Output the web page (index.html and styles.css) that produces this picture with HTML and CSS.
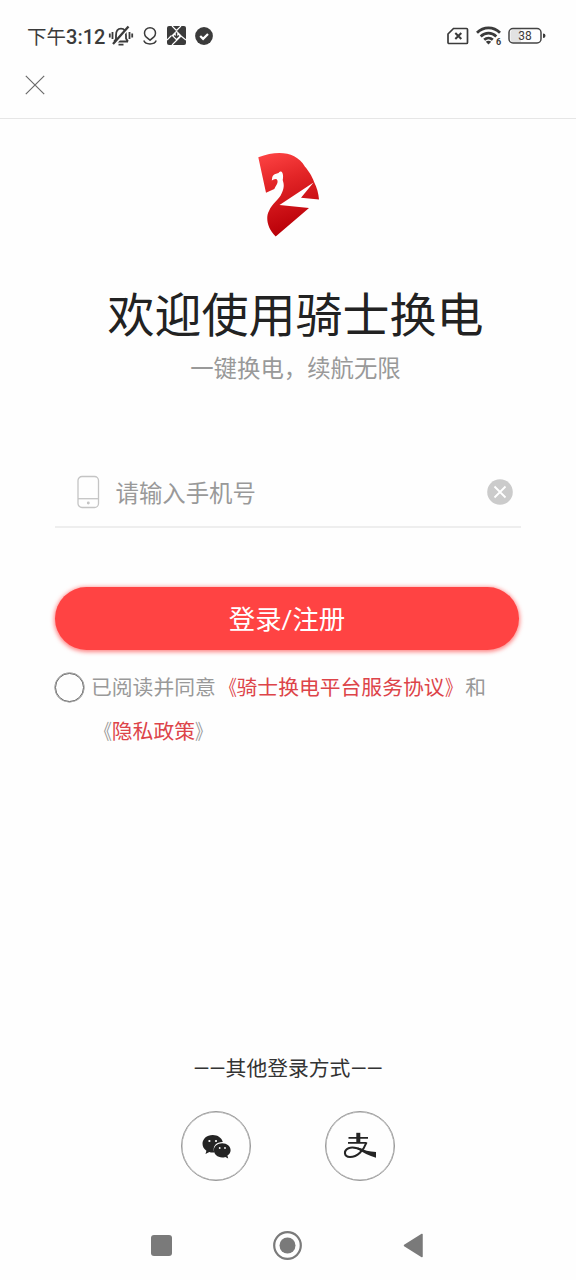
FILE: index.html
```html
<!DOCTYPE html>
<html lang="zh-CN">
<head>
<meta charset="utf-8">
<title>登录</title>
<link rel="stylesheet" href="styles.css">
</head>
<body>
<div class="screen">
  <div class="status">
    <span class="time"><span class="ampm">下午</span>3:12</span>
    <svg class="bell" width="26" height="22" viewBox="0 0 26 22" fill="none" stroke="#3b3b3b" stroke-width="1.8">
      <path d="M6 16.500h14M8 15V10.500C8 6 10 3.700 13 3.700S18 6 18 10.500V13.500l2 3"/>
      <path d="M6.200 16.500L8 14"/>
      <path d="M6.500 20L22 1.500" stroke="#fefefe" stroke-width="2"/>
      <path d="M5 19L20.500 1.500" stroke-width="2.300"/>
      <path d="M10.500 19.700h5M4.500 7v7M1.800 8.500v4M21.500 7v7M24.200 8.500v4"/>
    </svg>
    <svg class="pin" width="16" height="20" viewBox="0 0 16 20" fill="none" stroke="#3b3b3b" stroke-width="1.500">
      <path d="M8 14.200L4.300 11.200A5.500 5.500 0 1 1 11.700 11.200ZM1.800 14.500c1.700 4.500 10.700 4.500 12.400 0"/>
    </svg>
    <svg class="tile" width="19" height="19" viewBox="0 0 19 19">
      <rect width="19" height="19" rx="2" fill="#3b3b3b"/>
      <path d="M5 0L9.500 4.500M14 10L19 14M9.500 4.500L14 0M4.500 9.500L0 14M14 10L5 19" stroke="#fff" stroke-width="1.200" fill="none"/>
      <path d="M9.500 4.500l5 5-5 5-5-5Z" fill="#fff"/>
      <path d="M9.500 6.500v5M7.200 9.500l2.300 2.300 2.300-2.300" stroke="#3b3b3b" stroke-width="1.400" fill="none"/>
    </svg>
    <svg class="check" width="18" height="18" viewBox="0 0 18 18">
      <circle cx="9" cy="9" r="8.900" fill="#3b3b3b"/>
      <path d="M5.200 9l2.900 2.900L13 7" fill="none" stroke="#fff" stroke-width="2.200"/>
    </svg>
    <svg class="sim" width="22" height="18" viewBox="0 0 22 18" fill="none" stroke="#3b3b3b" stroke-width="1.700">
      <path d="M6.500 1.500H19.500a1 1 0 0 1 1 1V15.500a1 1 0 0 1-1 1H2a1 1 0 0 1-1-1V7Z"/>
      <path d="M8.300 6l6 6M14.300 6l-6 6" stroke-width="2"/>
    </svg>
    <svg class="wifi" width="26" height="20" viewBox="0 0 26 20" fill="none" stroke="#3b3b3b" stroke-width="2.700">
      <path d="M1 6.800C7.500.2 17.500.2 24 6.800M4.700 10.500c4.500-4.500 11.100-4.500 15.600 0M8.200 13.800c2.500-2.400 6.100-2.400 8.600 0"/>
      <path d="M9.800 15.700q2.700-1.800 5.400 0l-2.700 2.900Z" fill="#3b3b3b" stroke="none"/>
      <text x="20" y="19" class="wifi-gen">6</text>
    </svg>
    <svg class="battery" width="38" height="18" viewBox="0 0 38 18">
      <path d="M6 2.500h7v13H6a3.500 3.500 0 0 1-3.500-3.500V6A3.500 3.500 0 0 1 6 2.500Z" fill="#e2e2e2"/>
      <rect x="1" y="1.500" width="32" height="14.500" rx="4" fill="none" stroke="#444" stroke-width="1.500"/>
      <path d="M35 6.500q2.500 0 2.500 2.300t-2.500 2.300Z" fill="#3b3b3b"/>
      <text x="17" y="13" text-anchor="middle" class="level">38</text>
    </svg>
  </div>

  <div class="navbar">
    <svg width="20" height="20" viewBox="0 0 20 20" stroke="#6b6b6b" stroke-width="1.200"><path d="M.8.800l18.400 18.400M19.200.800L.8 19.200"/></svg>
  </div>

  <div class="brand">
    <svg class="logo" width="62" height="86" viewBox="0 0 62 86">
      <defs><linearGradient id="red" x1="0" y1="0" x2=".25" y2="1"><stop offset="0" stop-color="#ff4545"/><stop offset=".4" stop-color="#e32527"/><stop offset="1" stop-color="#b90008"/></linearGradient></defs>
      <path fill="url(#red)" d="M.3 5.300C20-2 38-.5 47 14.700C50 18 54 24 56 29.700C59 36 60.500 41 61 47.500L43 45.700L55.500 30.500L21.500 53L51 56L17.700 84.500C9 76 7.500 65 11 59C14 51.500 21 48 23.700 41.300C27 34 25.500 31 24.700 28C25.500 24 25 20 23 19.500Q21.500 19 20.500 21Q15 22 14.300 25L13.800 28.500Q16.500 26.300 18.700 27.200Q20.300 29 19 32Q17.500 34.500 16.300 37L8 40.700Z"/>
    </svg>
    <h1 class="title">欢迎使用骑士换电</h1>
    <p class="tagline">一键换电，续航无限</p>
  </div>

  <div class="phone">
    <svg class="device" width="23" height="34" viewBox="0 0 23 34" fill="none" stroke="#c4c4c4" stroke-width="1.300">
      <rect x="1" y="1.500" width="20.500" height="31" rx="4"/><path d="M1 23.700h20.500"/><circle cx="11.300" cy="28" r=".8" fill="#999"/>
    </svg>
    <span class="placeholder">请输入手机号</span>
    <svg class="clear" width="26" height="26" viewBox="0 0 26 26"><circle cx="13" cy="13" r="12.800" fill="#cbcbcb"/><path d="M7.500 7.500l11 11M18.500 7.500l-11 11" stroke="#fff" stroke-width="1.800"/></svg>
  </div>

  <div class="submit">登录/注册</div>

  <div class="terms">
    <span class="radio"></span>
    <p class="agree">已阅读并同意<span class="link"><span class="open">《</span>骑士换电平台服务协议<span class="close">》</span></span>和<br><span class="open">《</span><span class="link">隐私政策</span><span class="close">》</span></p>
  </div>

  <div class="other">——其他登录方式——</div>
  <div class="socials">
    <div class="social">
      <svg class="wechat" width="30" height="26" viewBox="0 0 30 26">
        <path fill="#242424" d="M10.800 1C4.600 1 .5 5 .5 9.800c0 2.900 1.500 5.300 3.900 6.900L3.500 20l3.800-2c1.600.5 3.300.6 5 .4C10 11.500 15 7.700 20.800 7.900C19.700 3.800 15.700 1 10.800 1Z"/>
        <path fill="#242424" d="M20.200 9.200c-4.800 0-8.300 3.100-8.300 7s3.500 7.200 8.300 7.200c1.100 0 2.100-.1 3.100-.5l2.900 1.700-.8-3c2.100-1.300 3.200-3.200 3.200-5.400c0-3.900-3.600-7-8.400-7Z"/>
        <g fill="#fff"><circle cx="7.400" cy="7" r="1.100"/><circle cx="14" cy="7" r="1.100"/><circle cx="17.700" cy="14" r=".9"/><circle cx="23" cy="14" r=".9"/></g>
      </svg>
    </div>
    <div class="social">
      <svg class="pay" width="34" height="28" viewBox="0 0 34 28">
        <path fill="none" stroke="#242424" stroke-width="1.700" d="M5.500 5.800h19.500M5 10.800H23.500"/>
        <path fill="#242424" d="M13.300.8h4v10h-4Z"/>
        <path fill="none" stroke="#242424" stroke-width="2.100" d="M23.500 10.500C20.500 18.500 14.500 25 7 25C.8 25 .3 18.500 5.500 16.200C9.500 14.500 16 16.500 20 18.300"/>
        <path fill="#242424" d="M15 15.500c6.500 2.800 11 4.300 18 4.500v5.800C26 23.800 20 20.500 14 17Z"/>
      </svg>
    </div>
  </div>

  <div class="system">
    <svg width="21" height="21" viewBox="0 0 21 21"><rect width="21" height="21" rx="3" fill="#7a7a7a"/></svg>
    <svg width="29" height="29" viewBox="0 0 29 29"><circle cx="14.500" cy="14.500" r="13.300" fill="none" stroke="#7a7a7a" stroke-width="2.200"/><circle cx="14.500" cy="14.500" r="8" fill="#7a7a7a"/></svg>
    <svg width="20" height="25" viewBox="0 0 20 25"><path d="M1.500 12.500L19 1.500v22Z" fill="#7a7a7a" stroke="#7a7a7a" stroke-width="1.500" stroke-linejoin="round"/></svg>
  </div>
</div>
</body>
</html>
```
FILE: styles.css
```css
* { box-sizing: border-box; }
body { margin: 0; background: #fefefe; font-family: Roboto, "Noto Sans CJK SC", sans-serif; text-spacing-trim: space-all; }
h1, p { margin: 0; font-weight: 400; }
svg { display: block; flex: none; }
.screen { width: 576px; height: 1280px; display: flex; flex-direction: column; }

.status { height: 61px; padding: 10px 30px 0 27px; display: flex; align-items: center; color: #3b3b3b; }
.time { width: 81px; font-size: 20px; font-weight: 500; white-space: nowrap; }
.ampm { font-size: 19.5px; font-weight: 400; }
.pin { margin-left: 8px; }
.tile { margin-left: 9px; }
.check { margin-left: 9px; }
.sim { margin-left: auto; }
.wifi { margin-left: 7px; }
.battery { margin-left: 6px; }
.wifi-gen { font: 700 9px Roboto, sans-serif; fill: #3b3b3b; stroke: none; }
.level { font: 400 12px Roboto, sans-serif; fill: #3b3b3b; }

.navbar { height: 58px; padding: 14px 25px 0; border-bottom: 1px solid #e6e6e6; }

.brand { display: flex; flex-direction: column; align-items: center; padding: 33px 0 0 15px; }
.logo { margin-right: 14px; }
.title { margin-top: 43px; font-size: 47px; line-height: 70px; color: #222; }
.tagline { margin-top: 1px; font-size: 23.4px; line-height: 34px; color: #999; }

.phone { height: 70px; margin: 72px 55px 0; padding: 0 8px 0 22px; display: flex; align-items: center; border-bottom: 2px solid #eee; }
.placeholder { flex: 1; margin-left: 15.500px; font-size: 23.4px; color: #999; }

.submit { height: 63px; margin: 59px 57px 0 55px; border-radius: 32px; background: #ff4343; box-shadow: 0 1px 4px 1px rgba(255, 67, 67, .65); color: #fff; font-size: 26.4px; line-height: 67px; text-align: center; }

.terms { display: flex; margin: 16px 0 0 54px; }
.radio { width: 29px; height: 29px; margin: 7px 7.500px 0 .5px; border: 1px solid #666; border-radius: 50%; box-shadow: 0 0 0 .5px #777; }
.agree { font-size: 20.8px; line-height: 44px; color: #999; white-space: nowrap; }
.link { color: #dd4449; }
.open, .close { display: inline-block; width: 1em; line-height: 1; transform: scaleX(.8); }
.open { transform-origin: right; }
.close { transform-origin: left; }

.other { margin-top: 293px; font-size: 20.8px; line-height: 44px; text-align: center; color: #333; }
.socials { display: flex; justify-content: center; gap: 74px; margin-top: 20px; }
.social { width: 70px; height: 70px; border: 1px solid #999; border-radius: 50%; box-shadow: inset 0 0 0 .5px #aaa; display: flex; align-items: center; justify-content: center; }
.wechat { margin: 1px 0 0 1px; }

.system { margin-top: auto; height: 70px; padding: 0 153px 0 151px; display: flex; align-items: center; justify-content: space-between; }
```
